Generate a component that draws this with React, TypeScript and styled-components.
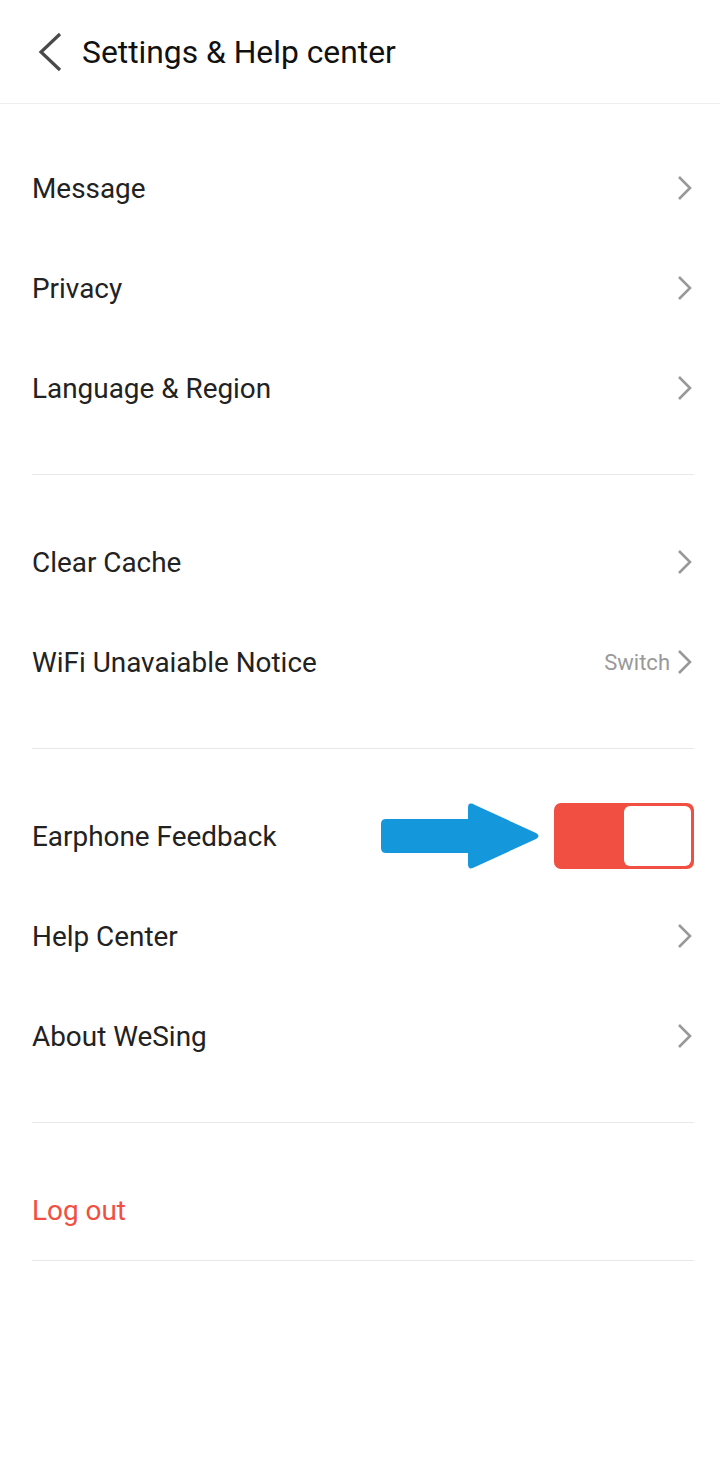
import * as React from "react";
import styled, {createGlobalStyle} from "styled-components";

const textColor = "#222";
const dividerColor = "#e8e8e8";
const chevronColor = "#999";
const red = "#f04f41";

const GlobalStyle = createGlobalStyle`
	html, body {
		margin: 0;
		padding: 0;
		background: #fff;
	}
	body {
		font-family: Roboto, "Noto Sans", "Liberation Sans", sans-serif;
		color: ${textColor};
	}
`;

const Page = styled.div`
	width: 720px;
	min-height: 1460px;
	background: #fff;
`;

const Header = styled.header`
	display: flex;
	align-items: center;
	height: 104px;
	border-bottom: 1px solid #efefef;
	box-sizing: border-box;
	padding-left: 36px;
`;

const BackButton = styled.div`
	display: flex;
	align-items: center;
	width: 46px;
	height: 40px;
`;

const Title = styled.h1`
	margin: 0;
	font-size: 31.8px;
	font-weight: 400;
	color: #111;
`;

const Section = styled.section<{$first?: boolean; $last?: boolean}>`
	margin: 0 26px 0 32px;
	padding-top: ${(p) => (p.$first ? "34px" : "37px")};
	padding-bottom: ${(p) => (p.$last ? "0" : "36px")};
	border-bottom: 1px solid ${dividerColor};
`;

const Row = styled.div`
	display: flex;
	align-items: center;
	height: 100px;
`;

const Label = styled.span<{$danger?: boolean}>`
	flex: 1;
	font-size: 27.9px;
	color: ${(p) => (p.$danger ? red : textColor)};
`;

const Hint = styled.span`
	font-size: 22px;
	color: #999;
	margin-right: 6px;
`;

const Toggle = styled.div`
	width: 140px;
	height: 66px;
	border-radius: 7px;
	background: ${red};
	display: flex;
	align-items: center;
	justify-content: flex-end;
	padding: 3px;
	box-sizing: border-box;
`;

const Knob = styled.div`
	width: 67px;
	height: 60px;
	border-radius: 6px;
	background: #fff;
`;

const Chevron = () => (
	<svg width="18" height="26" viewBox="0 0 18 26">
		<path d="M3 2 L14 13 L3 24" fill="none" stroke={chevronColor} strokeWidth="2.6" />
	</svg>
);

const BackIcon = () => (
	<svg width="28" height="40" viewBox="0 0 28 40">
		<path d="M24 2 L5 20 L24 38" fill="none" stroke="#4a4a4a" strokeWidth="3.2" />
	</svg>
);

const Arrow = () => (
	<svg width="162" height="68" viewBox="0 0 162 68" style={{marginRight: 12}}>
		<path
			d="M6 17 H88 V6 Q88 -1 95 3 L156 31 Q161 34 156 37 L95 65 Q88 69 88 62 V51 H6 Q1 51 1 46 V22 Q1 17 6 17 Z"
			fill="#1597db"
		/>
	</svg>
);

const NavRow = ({label, hint}: {label: string; hint?: string}) => (
	<Row>
		<Label>{label}</Label>
		{hint && <Hint>{hint}</Hint>}
		<Chevron />
	</Row>
);

export default function App() {
	return (
		<Page>
			<GlobalStyle />
			<Header>
				<BackButton>
					<BackIcon />
				</BackButton>
				<Title>Settings &amp; Help center</Title>
			</Header>
			<Section $first>
				<NavRow label="Message" />
				<NavRow label="Privacy" />
				<NavRow label="Language & Region" />
			</Section>
			<Section>
				<NavRow label="Clear Cache" />
				<NavRow label="WiFi Unavaiable Notice" hint="Switch" />
			</Section>
			<Section>
				<Row>
					<Label>Earphone Feedback</Label>
					<Arrow />
					<Toggle>
						<Knob />
					</Toggle>
				</Row>
				<NavRow label="Help Center" />
				<NavRow label="About WeSing" />
			</Section>
			<Section $last>
				<Row>
					<Label $danger>Log out</Label>
				</Row>
			</Section>
		</Page>
	);
}
